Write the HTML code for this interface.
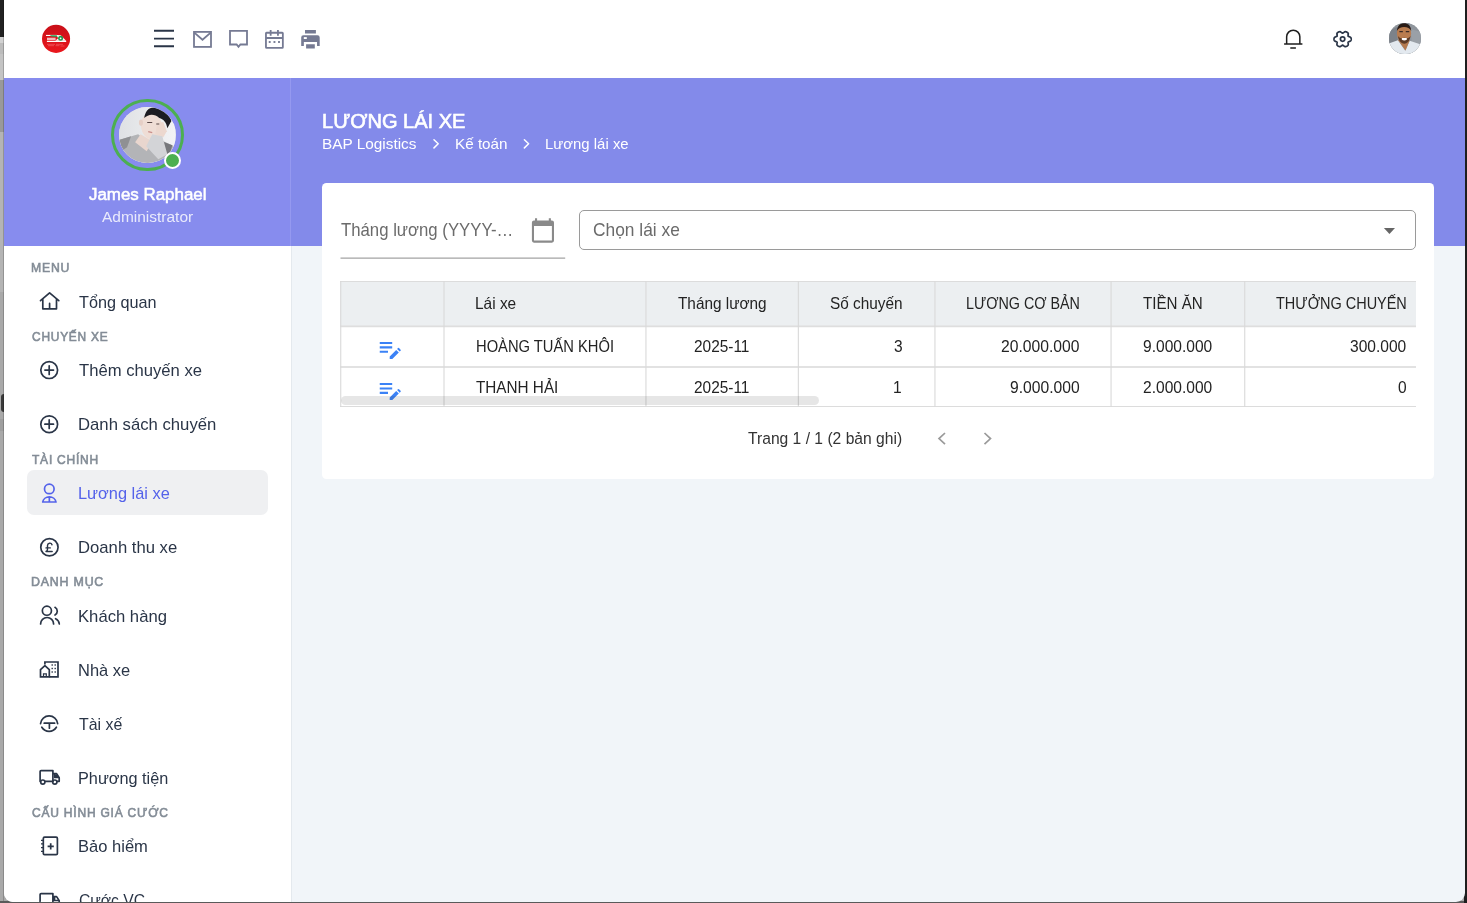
<!DOCTYPE html>
<html lang="vi">
<head>
<meta charset="utf-8">
<title>Lương lái xe</title>
<style>
*{box-sizing:border-box;margin:0;padding:0}
html,body{width:1467px;height:903px;overflow:hidden}
body{font-family:"Liberation Sans",sans-serif;background:#a9a9a9;position:relative;color:#2a3547}
.abs{position:absolute}
/* backdrop visible behind window on the left */
#backdrop{position:absolute;left:0;top:0;width:14px;height:903px;background:#a9a9a9}
#backdrop div{position:absolute;left:0;width:14px}
#win{position:absolute;left:4px;top:0;width:1461px;height:901.600px;background:#f1f5f9;border-radius:0 0 9px 9px;overflow:hidden}
#pg{position:absolute;left:-4px;top:0;width:1467px;height:903px}
#topbar{position:absolute;left:4px;top:0;width:1461px;height:77.600px;background:#fff}
#sidebar{position:absolute;left:4px;top:78px;width:288px;height:825px;background:#fff;border-right:1px solid #e4e9ee}
#profile{position:absolute;left:4px;top:77.600px;width:287px;height:168.200px;background:#878cee;border-right:1px solid #9599f0}
#mainband{position:absolute;left:291px;top:77.600px;width:1174px;height:168.200px;background:#838aea}
.t{position:absolute;white-space:nowrap;line-height:1;transform-origin:0 0}
.sec{position:absolute;left:27px;font-size:12.5px;font-weight:700;color:#8b97a2;letter-spacing:.6px;white-space:nowrap;line-height:1}
.mi{position:absolute;left:75px;font-size:16.5px;color:#2a3547;white-space:nowrap;line-height:1}
.ic{position:absolute}
.hl{background:#e2e2e2}
.vl{background:#e2e2e2}
.th,.td{font-size:16px;color:#262626}
svg{display:block;overflow:visible}
</style>
</head>
<body>
<div id="backdrop"><div style="top:0;height:37px;background:#212121"></div><div style="top:37px;height:6px;background:#d2d2d2"></div><div style="top:43px;height:11px;background:#bcbcbc"></div><div style="top:54px;height:26px;background:#c4c4c4"></div><div style="top:80px;height:52px;background:#999"></div><div style="top:132px;height:160px;background:#b4b4b4"></div><div style="top:394px;height:18px;background:#3a3a3a;left:1px;border-radius:3px"></div><div style="top:419px;height:12px;background:#9f9f9f"></div><div style="top:0;left:3px;width:1px;height:903px;background:rgba(0,0,0,.18)"></div></div>
<div class="abs" style="left:0;top:901px;width:1467px;height:2px;background:#5a5a5a"></div>
<div class="abs" style="left:1464px;top:0;width:3px;height:903px;background:#1e1e1e"></div>
<div id="win"><div id="pg">
  <div id="topbar"></div>
  <div id="sidebar"></div>
  <div id="profile"></div>
  <div id="mainband"></div>

  <div id="uava" class="abs" style="left:1389.400px;top:22.800px;width:31.600px;height:31.600px;border-radius:50%;overflow:hidden;background:#8e949b">
    <svg width="31.600" height="31.600" viewBox="0 0 32 32">
      <defs><filter id="bl2"><feGaussianBlur stdDeviation=".55"/></filter></defs>
      <rect width="32" height="32" fill="#8f959c"/>
      <g filter="url(#bl2)">
      <path d="M0 8 L8 4 L9 20 L0 22Z" fill="#7c828a"/>
      <path d="M22 6 L32 9 V24 L23 20Z" fill="#9aa0a7"/>
      <path d="M-1 21 L9 17.500 L16.500 28 L21 18 L33 22 V33 H-1Z" fill="#e3e9ef"/>
      <path d="M9 17 L21 17.500 L16.700 27.800Z" fill="#b57a50"/>
      <ellipse cx="15.200" cy="10.500" rx="7.200" ry="9.300" fill="#b97c4f"/>
      <path d="M8 8 C8.300 2.500 11.500 .2 15.300 .2 C19.300 .2 22.200 2.500 22.500 8 C20.500 2.800 10.500 2.500 8 8Z" fill="#2a1d18"/>
      <path d="M9 13 C10 19.500 13 21 15.500 21 C18.500 21 21 18.500 21.800 13 C20 16.500 18 15 15.500 15 C13 15 11 16.500 9 13Z" fill="#5b3a28"/>
      <path d="M13 15.300 h5 v1.700 c-1.500 1-3.500 1-5 0Z" fill="#fff"/>
      <path d="M10.500 8.700 h3.500 M17 8.700 h3.500" stroke="#3a2a25" stroke-width="1.100"/>
      </g>
    </svg>
  </div>
  <!-- profile -->
  <div class="abs" style="left:111.400px;top:98.700px;width:72.500px;height:72.500px;border-radius:50%;border:3.800px solid #4caf50"></div>
  <div id="avatar" class="abs" style="left:119.200px;top:106.800px;width:56.400px;height:56.400px;border-radius:50%;overflow:hidden;background:#e3e5e8">
    <svg width="56.400" height="56.400" viewBox="0 0 56 56">
      <defs><linearGradient id="bg1" x1="0" y1="0" x2="1" y2="0"><stop offset="0" stop-color="#dfe1e4"/><stop offset="1" stop-color="#f2f3f5"/></linearGradient>
      <filter id="bl1"><feGaussianBlur stdDeviation=".7"/></filter></defs>
      <rect width="56" height="56" fill="url(#bg1)"/>
      <g filter="url(#bl1)">
      <path d="M-1 33 L19 27 L24 31 L33 37 L40 32 L57 40 V57 H-1Z" fill="#b3b4b7"/>
      <path d="M-1 33 L12 29 L8 40 L2 44Z" fill="#8f9093"/>
      <path d="M40 33 L53 38 L50 48 L42 46Z" fill="#77787b"/>
      <path d="M21.500 27 L33 34 L27.500 44 L16 35Z" fill="#e9d6ce"/>
      <ellipse cx="32.500" cy="19.500" rx="10.500" ry="13.500" transform="rotate(-14 32.500 19.500)" fill="#efddd5"/>
      <ellipse cx="21.800" cy="15.500" rx="2" ry="3.200" fill="#e6cfc6"/>
      <path d="M25 11 C26 4 30 0 35 .5 C44 2 51 8 52 14 L48 21 C47 15 44 12 40 11 C35 6 29 7 25 11Z" fill="#1d1d20"/>
      <path d="M38 16 L44 15 L47.500 24 L44 30 L36 27Z" fill="#ecd8cf"/>
      <path d="M33 27 L43 29 L48 47 L39 52 L27 39Z" fill="#d3d4d7"/>
      <path d="M28 15.500 h5 M37 17 h3" stroke="#5a4a48" stroke-width="1"/>
      <path d="M29 24.500 l4 1" stroke="#c98f8a" stroke-width="1.400"/>
      </g>
    </svg>
  </div>
  <div class="abs" style="left:164px;top:151.700px;width:17.300px;height:17.300px;border-radius:50%;background:#4caf50;border:2.300px solid #fff"></div>

  <!-- menu -->
  <div class="abs" style="left:26.600px;top:470.100px;width:241.800px;height:44.600px;border-radius:7px;background:#eff0f2"></div>

  <!-- header -->

  <!-- card -->
  <div id="card" class="abs" style="left:322.300px;top:183.300px;width:1112px;height:295.700px;background:#fff;border-radius:4.500px"></div>
  <svg class="abs" style="left:0;top:0" width="600" height="270" viewBox="0 0 600 270"><path d="M340.500 258.200H565.200" stroke="#a3a3a3" stroke-width="1.200"/></svg>
  <div class="abs" style="left:579px;top:210px;width:837px;height:40px;border:1px solid #9a9a9a;border-radius:5px"></div>

  <!-- table -->
  <div id="tbl" class="abs" style="left:340px;top:281px;width:1076.400px;height:126.500px;overflow:hidden">
    <div class="abs" style="left:0;top:0;width:1100px;height:45.400px;background:#eceff1"></div>
    <svg class="abs" style="left:0;top:0" width="1100" height="127" viewBox="340 281 1100 127" fill="none">
      <path d="M340 281.500H1440M340 406.500H1440" stroke="#dcdcdc" stroke-width="1"/>
      <path d="M340 326.400H1440" stroke="#dedede" stroke-width="1.600"/>
      <path d="M340 367H1440" stroke="#e2e2e2" stroke-width="2"/>
      <path d="M340.75 281V407M444.0 281V407M645.95 281V407M798.35 281V407M934.95 281V407M1111.05 281V407M1244.75 281V407" stroke="#d9d9d9" stroke-width="1.100"/>
    </svg>
  </div>

  <div class="t" style="left:89.10px;top:186.00px;font-size:17.2px;color:#fff;-webkit-text-stroke:0.55px #fff;transform:scaleX(0.9839)">James Raphael</div>
  <div class="t" style="left:102.00px;top:209.10px;font-size:15.5px;color:rgba(255,255,255,.82);transform:scaleX(0.9984)">Administrator</div>
  <div class="t" style="left:30.92px;top:261.90px;font-size:12.5px;color:#838c96;letter-spacing:0.8px;-webkit-text-stroke:0.6px #838c96;transform:scaleX(0.9770)">MENU</div>
  <div class="t" style="left:31.90px;top:330.60px;font-size:12.5px;color:#838c96;letter-spacing:0.8px;-webkit-text-stroke:0.6px #838c96;transform:scaleX(0.9545)">CHUYẾN XE</div>
  <div class="t" style="left:31.90px;top:454.10px;font-size:12.5px;color:#838c96;letter-spacing:0.8px;-webkit-text-stroke:0.6px #838c96;transform:scaleX(0.9612)">TÀI CHÍNH</div>
  <div class="t" style="left:30.71px;top:575.70px;font-size:12.5px;color:#838c96;letter-spacing:0.8px;-webkit-text-stroke:0.6px #838c96;transform:scaleX(0.9912)">DANH MỤC</div>
  <div class="t" style="left:31.60px;top:806.80px;font-size:12.5px;color:#838c96;letter-spacing:0.8px;-webkit-text-stroke:0.6px #838c96;transform:scaleX(0.9630)">CẤU HÌNH GIÁ CƯỚC</div>
  <div class="t" style="left:79.20px;top:293.90px;font-size:16.4px;color:#2a3547;transform:scaleX(0.9903)">Tổng quan</div>
  <div class="t" style="left:79.05px;top:361.90px;font-size:16.4px;color:#2a3547;transform:scaleX(1.0157)">Thêm chuyến xe</div>
  <div class="t" style="left:78.28px;top:415.80px;font-size:16.4px;color:#2a3547;transform:scaleX(1.0189)">Danh sách chuyến</div>
  <div class="t" style="left:77.80px;top:484.80px;font-size:16.4px;color:#5462ea;transform:scaleX(0.9992)">Lương lái xe</div>
  <div class="t" style="left:78.18px;top:538.80px;font-size:16.4px;color:#2a3547;transform:scaleX(1.0178)">Doanh thu xe</div>
  <div class="t" style="left:78.18px;top:607.90px;font-size:16.4px;color:#2a3547;transform:scaleX(1.0165)">Khách hàng</div>
  <div class="t" style="left:78.10px;top:661.70px;font-size:16.4px;color:#2a3547;transform:scaleX(1.0036)">Nhà xe</div>
  <div class="t" style="left:78.60px;top:715.70px;font-size:16.4px;color:#2a3547;transform:scaleX(0.9704)">Tài xế</div>
  <div class="t" style="left:78.11px;top:769.70px;font-size:16.4px;color:#2a3547;transform:scaleX(0.9926)">Phương tiện</div>
  <div class="t" style="left:78.29px;top:837.80px;font-size:16.4px;color:#2a3547;transform:scaleX(1.0090)">Bảo hiểm</div>
  <div class="t" style="left:79.20px;top:891.70px;font-size:16.4px;color:#2a3547;transform:scaleX(0.9561)">Cước VC</div>
  <div class="t" style="left:322.07px;top:111.80px;font-size:19.4px;color:#fff;-webkit-text-stroke:0.6px #fff;transform:scaleX(1.0336)">LƯƠNG LÁI XE</div>
  <div class="t" style="left:322.08px;top:136.10px;font-size:15.0px;color:#fff;transform:scaleX(1.0237)">BAP Logistics</div>
  <div class="t" style="left:454.68px;top:136.10px;font-size:15.0px;color:#fff;transform:scaleX(1.0165)">Kế toán</div>
  <div class="t" style="left:544.61px;top:136.10px;font-size:15.0px;color:#fff;transform:scaleX(0.9946)">Lương lái xe</div>
  <div class="t" style="left:341.10px;top:221.10px;font-size:18.4px;color:#6b6b6b;transform:scaleX(0.9106)">Tháng lương (YYYY-…</div>
  <div class="t" style="left:593.10px;top:221.10px;font-size:18.4px;color:#6b6b6b;transform:scaleX(0.9436)">Chọn lái xe</div>
  <div class="t" style="left:475.46px;top:294.70px;font-size:16.5px;color:#232323;transform:scaleX(0.9358)">Lái xe</div>
  <div class="t" style="left:677.80px;top:294.70px;font-size:16.5px;color:#232323;transform:scaleX(0.9298)">Tháng lương</div>
  <div class="t" style="left:829.80px;top:294.70px;font-size:16.5px;color:#232323;transform:scaleX(0.9306)">Số chuyến</div>
  <div class="t" style="left:965.53px;top:294.70px;font-size:16.5px;color:#232323;transform:scaleX(0.8678)">LƯƠNG CƠ BẢN</div>
  <div class="t" style="left:1143.10px;top:294.70px;font-size:16.5px;color:#232323;transform:scaleX(0.9178)">TIỀN ĂN</div>
  <div class="t" style="left:1276.10px;top:294.70px;font-size:16.5px;color:#232323;transform:scaleX(0.8765)">THƯỞNG CHUYẾN</div>
  <div class="t" style="left:475.51px;top:337.90px;font-size:16.5px;color:#232323;transform:scaleX(0.8928)">HOÀNG TUẤN KHÔI</div>
  <div class="t" style="left:693.60px;top:337.90px;font-size:16.5px;color:#232323;transform:scaleX(0.9332)">2025-11</div>
  <div class="t" style="left:893.54px;top:337.90px;font-size:16.5px;color:#232323;transform:scaleX(0.9400)">3</div>
  <div class="t" style="left:1001.00px;top:337.90px;font-size:16.5px;color:#232323;transform:scaleX(0.9502)">20.000.000</div>
  <div class="t" style="left:1143.10px;top:337.90px;font-size:16.5px;color:#232323;transform:scaleX(0.9436)">9.000.000</div>
  <div class="t" style="left:1350.00px;top:337.90px;font-size:16.5px;color:#232323;transform:scaleX(0.9434)">300.000</div>
  <div class="t" style="left:476.10px;top:378.70px;font-size:16.5px;color:#232323;transform:scaleX(0.9260)">THANH HẢI</div>
  <div class="t" style="left:693.60px;top:378.70px;font-size:16.5px;color:#232323;transform:scaleX(0.9332)">2025-11</div>
  <div class="t" style="left:892.54px;top:378.70px;font-size:16.5px;color:#232323;transform:scaleX(0.9400)">1</div>
  <div class="t" style="left:1009.80px;top:378.70px;font-size:16.5px;color:#232323;transform:scaleX(0.9491)">9.000.000</div>
  <div class="t" style="left:1143.10px;top:378.70px;font-size:16.5px;color:#232323;transform:scaleX(0.9436)">2.000.000</div>
  <div class="t" style="left:1397.64px;top:378.70px;font-size:16.5px;color:#232323;transform:scaleX(0.9400)">0</div>
  <div class="t" style="left:747.60px;top:431.00px;font-size:16.8px;color:#333;transform:scaleX(0.9319)">Trang 1 / 1 (2 bản ghi)</div>
  <svg id="icons" class="abs" style="left:0;top:0" width="1467" height="903" viewBox="0 0 1467 903" fill="none">
    <defs><linearGradient id="lg" x1="0" y1="0" x2="0" y2="1"><stop offset="0" stop-color="#c90f18"/><stop offset="1" stop-color="#ea171d"/></linearGradient></defs>
    <!-- logo -->
    <g id="logo">
      <circle cx="56.05" cy="38.85" r="14.05" fill="url(#lg)"/>
      <path d="M46 34.9h10.900v1.100H46z" fill="#fff"/>
      <path d="M50 35.300h7.600l1.100 1.700-7.400-.4z" fill="#23a455"/>
      <path d="M47 37.700h8.600v2.300H47z" fill="#f6b9bb"/>
      <path d="M56.600 35l4.200.300 5.300 5.500H55.400l2.700-2.600z" fill="#fff"/>
      <path d="M46.900 40.700h19.300v1.300H46.900z" fill="#fff"/>
      <circle cx="60.600" cy="38.300" r="2.500" fill="#1f9a4e"/>
      <circle cx="60.600" cy="38.300" r=".9" fill="#fff"/>
      <path d="M47 44.300h8M56 44.300h7M48 45.700h6M55.500 45.700h4M60.500 46h4" stroke="#f0565c" stroke-width=".8"/>
    </g>
    <!-- hamburger -->
    <g stroke="#2a3547" stroke-width="1.900">
      <path d="M154 30.700h20M154 38.650h20M154 46.200h20"/>
    </g>
    <!-- topbar left icons -->
    <g stroke="#757a93" stroke-width="1.800" fill="none" stroke-linejoin="miter">
      <rect x="194" y="31.900" width="17" height="15"/>
      <path d="M194.300 32.600l8.200 7.200 8.200-7.200"/>
      <path d="M230 30.900h17v13.600h-6.600l-1.900 2.400-1.900-2.400h-6.600z"/>
      <rect x="265.950" y="32.750" width="16.900" height="15.150" rx=".6"/>
      <path d="M270.650 29.950v5.700M277.950 29.950v5.700M266 38h16.800"/>
    </g>
    <g fill="#757a93">
      <rect x="268.750" y="41.050" width="1.900" height="1.900"/><rect x="273.500" y="41.050" width="1.900" height="1.900"/><rect x="278.050" y="41.050" width="1.900" height="1.900"/>
      <path d="M305 30.100h10.900v3.400H305zM303.400 35.200h14.100a2.200 2.200 0 0 1 2.200 2.200v8.650h-2.650v-4.150H303.850v4.150H301.200v-8.650a2.200 2.200 0 0 1 2.200-2.200zM306.100 44.300h8.700v4.300h-8.700z"/>
      <rect x="303.800" y="37.100" width="3" height="1.900" fill="#fff"/>
    </g>
    <!-- topbar right icons -->
    <g stroke="#1e1e1e" stroke-width="1.500" fill="none">
      <path d="M1286.650 44V36.800a6.600 6.600 0 0 1 13.200 0V44M1284.100 44.050h18.300M1290.300 48h5.600"/>
    </g>
    <g stroke="#2a3547" stroke-width="1.700" fill="none" stroke-linejoin="round">
      <path d="M1351.20 39.15 L1351.19 39.43 L1351.16 39.71 L1351.10 39.99 L1351.02 40.26 L1350.91 40.53 L1350.76 40.78 L1350.55 41.01 L1350.10 41.17 L1349.83 41.36 L1349.49 41.51 L1349.14 41.63 L1348.81 41.75 L1348.52 41.86 L1348.29 42.00 L1348.14 42.16 L1348.07 42.36 L1348.06 42.61 L1348.10 42.90 L1348.16 43.23 L1348.22 43.58 L1348.25 43.93 L1348.21 44.24 L1348.29 44.69 L1348.19 44.98 L1348.02 45.23 L1347.83 45.45 L1347.62 45.65 L1347.40 45.83 L1347.15 46.00 L1346.90 46.15 L1346.63 46.28 L1346.36 46.40 L1346.08 46.49 L1345.78 46.56 L1345.49 46.60 L1345.18 46.61 L1344.86 46.55 L1344.49 46.27 L1344.18 46.14 L1343.87 45.94 L1343.58 45.72 L1343.31 45.50 L1343.06 45.32 L1342.83 45.21 L1342.60 45.17 L1342.37 45.21 L1342.14 45.32 L1341.89 45.50 L1341.62 45.72 L1341.33 45.94 L1341.02 46.14 L1340.71 46.27 L1340.34 46.55 L1340.02 46.61 L1339.71 46.60 L1339.42 46.56 L1339.12 46.49 L1338.84 46.40 L1338.57 46.28 L1338.30 46.15 L1338.05 46.00 L1337.80 45.83 L1337.58 45.65 L1337.37 45.45 L1337.18 45.23 L1337.01 44.98 L1336.91 44.69 L1336.99 44.24 L1336.95 43.93 L1336.98 43.58 L1337.04 43.23 L1337.10 42.90 L1337.14 42.61 L1337.13 42.36 L1337.06 42.16 L1336.91 42.00 L1336.68 41.86 L1336.39 41.75 L1336.06 41.63 L1335.71 41.51 L1335.37 41.36 L1335.10 41.17 L1334.65 41.01 L1334.44 40.78 L1334.29 40.53 L1334.18 40.26 L1334.10 39.99 L1334.04 39.71 L1334.01 39.43 L1334.00 39.15 L1334.01 38.87 L1334.04 38.59 L1334.10 38.31 L1334.18 38.04 L1334.29 37.77 L1334.44 37.52 L1334.65 37.29 L1335.10 37.13 L1335.37 36.94 L1335.71 36.79 L1336.06 36.67 L1336.39 36.55 L1336.68 36.44 L1336.91 36.30 L1337.06 36.14 L1337.13 35.94 L1337.14 35.69 L1337.10 35.40 L1337.04 35.07 L1336.98 34.72 L1336.95 34.37 L1336.99 34.06 L1336.91 33.61 L1337.01 33.32 L1337.18 33.07 L1337.37 32.85 L1337.58 32.65 L1337.80 32.47 L1338.05 32.30 L1338.30 32.15 L1338.57 32.02 L1338.84 31.90 L1339.12 31.81 L1339.42 31.74 L1339.71 31.70 L1340.02 31.69 L1340.34 31.75 L1340.71 32.03 L1341.02 32.16 L1341.33 32.36 L1341.62 32.58 L1341.89 32.80 L1342.14 32.98 L1342.37 33.09 L1342.60 33.13 L1342.83 33.09 L1343.06 32.98 L1343.31 32.80 L1343.58 32.58 L1343.87 32.36 L1344.18 32.16 L1344.49 32.03 L1344.86 31.75 L1345.18 31.69 L1345.49 31.70 L1345.78 31.74 L1346.08 31.81 L1346.36 31.90 L1346.63 32.02 L1346.90 32.15 L1347.15 32.30 L1347.40 32.47 L1347.62 32.65 L1347.83 32.85 L1348.02 33.07 L1348.19 33.32 L1348.29 33.61 L1348.21 34.06 L1348.25 34.37 L1348.22 34.72 L1348.16 35.07 L1348.10 35.40 L1348.06 35.69 L1348.07 35.94 L1348.14 36.14 L1348.29 36.30 L1348.52 36.44 L1348.81 36.55 L1349.14 36.67 L1349.49 36.79 L1349.83 36.94 L1350.10 37.13 L1350.55 37.29 L1350.76 37.52 L1350.91 37.77 L1351.02 38.04 L1351.10 38.31 L1351.16 38.59 L1351.19 38.87Z"/>
      <circle cx="1342.6" cy="39.1" r="2.200"/>
    </g>
  <!-- sidebar icons -->
    <g stroke="#2a3547" stroke-width="1.700" fill="none" stroke-linecap="round" stroke-linejoin="round">
      <path d="M40.5 300.700L49.600 292.900 58.800 300.700M42.800 299V308.800H56.500V299M49.600 303.400V308.800"/>
      <circle cx="49.2" cy="370.1" r="8.4"/><path d="M44.9 370.1h8.6M49.2 365.8v8.6"/>
      <circle cx="49.2" cy="424.2" r="8.4"/><path d="M44.9 424.2h8.6M49.2 419.9v8.6"/>
      <circle cx="49.400" cy="547.200" r="8.650"/>
      <path d="M52 544.800a2.300 2.300 0 0 0-4.500.700v3.700c0 1.200-.6 2-1.500 2.300h6.200M46 547.900h4.300" stroke-width="1.400"/>
      <circle cx="46.900" cy="610.700" r="4.550"/>
      <path d="M40.600 624a6.500 6.500 0 0 1 13 0M55 607.300a4.400 4.400 0 0 1 0 7.700M55.600 618.700a6.500 6.500 0 0 1 3.700 5.300"/>
      <path d="M40.55 723.60A8.6 8.6 0 0 1 57.65 723.60M56.39 727.26A8.6 8.6 0 0 1 41.81 727.26M44.2 723.2H54.6M49.4 723.2V728.2"/>
    </g>
    <g stroke="#5563ea" stroke-width="1.700" fill="none" stroke-linejoin="round">
      <circle cx="49.300" cy="488.900" r="4.800"/>
      <path d="M42.700 502a6.700 5.800 0 0 1 13.300 0zM49.350 496.300v5.700"/>
    </g>
    <g stroke="#2a3547" stroke-width="1.700" fill="none" stroke-linejoin="miter">
      <path d="M44.900 664.600V662H58V676.800H49.500"/>
      <path d="M40.500 676.800V669.700L44.900 665.700 49.300 669.700V676.800Z"/>
      <path d="M43.500 676.800v-3h2.800v3" stroke-width="1.200"/>
    </g>
    <g fill="#2a3547">
      <rect x="51.500" y="664.300" width="1.400" height="1.400"/><rect x="54.500" y="664.300" width="1.400" height="1.400"/>
      <rect x="51.500" y="667.800" width="1.400" height="1.400"/><rect x="54.500" y="667.800" width="1.400" height="1.400"/>
      <rect x="51.500" y="671.300" width="1.400" height="1.400"/><rect x="54.500" y="671.300" width="1.400" height="1.400"/>
    </g>
    <!-- truck -->
    <g stroke="#2a3547" stroke-width="1.700" fill="none" stroke-linejoin="round">
      <path d="M40.700 781.300H40.100V771.600a1 1 0 0 1 1-1H52.900V781.300H45"/>
      <path d="M52.900 773.600H56.600L59.200 777.600V781.300H57M52.900 781.300H52.600"/>
      <path d="M54.500 773.600v3.900h4.600" stroke-width="1.300"/>
      <circle cx="42.800" cy="782.100" r="2.100"/><circle cx="54.800" cy="782.100" r="2.100"/>
      <path d="M40.700 901.600H40.100V894.600a1 1 0 0 1 1-1H52.900V903M52.900 896.600H56.600L59.200 900.600V903M54.500 896.600v3.900h4.600"/>
    </g>
    <path d="M54.800 774.200h1.800l2.200 3.300h-4z" fill="#2a3547"/>
        <!-- notebook -->
    <g stroke="#2a3547" stroke-width="1.700" fill="none">
      <rect x="43.300" y="837.200" width="14.100" height="17.500" rx="1.300"/>
      <path d="M47.600 846.300h6.200M50.700 843.200v6.200" stroke-width="1.700"/>
      <path d="M41 840.300h2.300M41 843.800h2.300M41 847.600h2.300M41 851.400h2.300" stroke-width="1.300"/>
    </g>
  <!-- main icons -->
    <g stroke="#fff" stroke-width="1.500" fill="none" stroke-linecap="round" stroke-linejoin="round">
      <path d="M434 139.700l4.200 4.100-4.200 4.100M524.400 139.700l4.200 4.100-4.200 4.100"/>
    </g>
    <g fill="#8a8a8a">
      <path d="M535 218.200h2.100v2.200h11.700v-2.200h2.100v2.200h1a2.100 2.100 0 0 1 2.100 2.100v18.100a2.100 2.100 0 0 1-2.100 2.100h-17.900a2.100 2.100 0 0 1-2.100-2.100v-18.100a2.100 2.100 0 0 1 2.100-2.100h1zM534 226h17.900v14.600h-17.900z" fill-rule="evenodd"/>
    </g>
    <path d="M1383.900 228h11.100l-5.550 6z" fill="#666"/>
    <g fill="#3b82f6">
      <path d="M379.750 341.9h12.450v2.100h-12.450zM379.750 346.3h12.450v2.100h-12.450zM379.750 350.7h8.250v2.100h-8.250z"/>
      <path d="M389.700 359.0v-2.600l6.500-6.500 2.600 2.600-6.500 6.500zM397.100 349.0l.900-.900a.700.700 0 0 1 1 0l1.600 1.600a.700.700 0 0 1 0 1l-.900.900z"/>
      <path d="M379.750 383.0h12.450v2.100h-12.450zM379.750 387.4h12.450v2.100h-12.450zM379.750 391.8h8.250v2.100h-8.250z"/>
      <path d="M389.700 400.1v-2.600l6.500-6.500 2.600 2.600-6.500 6.500zM397.100 390.1l.900-.900a.700.700 0 0 1 1 0l1.600 1.600a.700.700 0 0 1 0 1l-.900.900z"/>
    </g>
    <g stroke="#9a9a9a" stroke-width="1.700" fill="none" stroke-linecap="butt" stroke-linejoin="miter">
      <path d="M945 433l-6 5.600 6 5.600M984.500 433l6 5.600-6 5.600"/>
    </g>
  </svg>
  <div id="sbar" class="abs" style="left:341px;top:396px;width:478px;height:9px;border-radius:5px;background:rgba(60,60,60,.13)"></div>
  
</div></div>
</body>
</html>
